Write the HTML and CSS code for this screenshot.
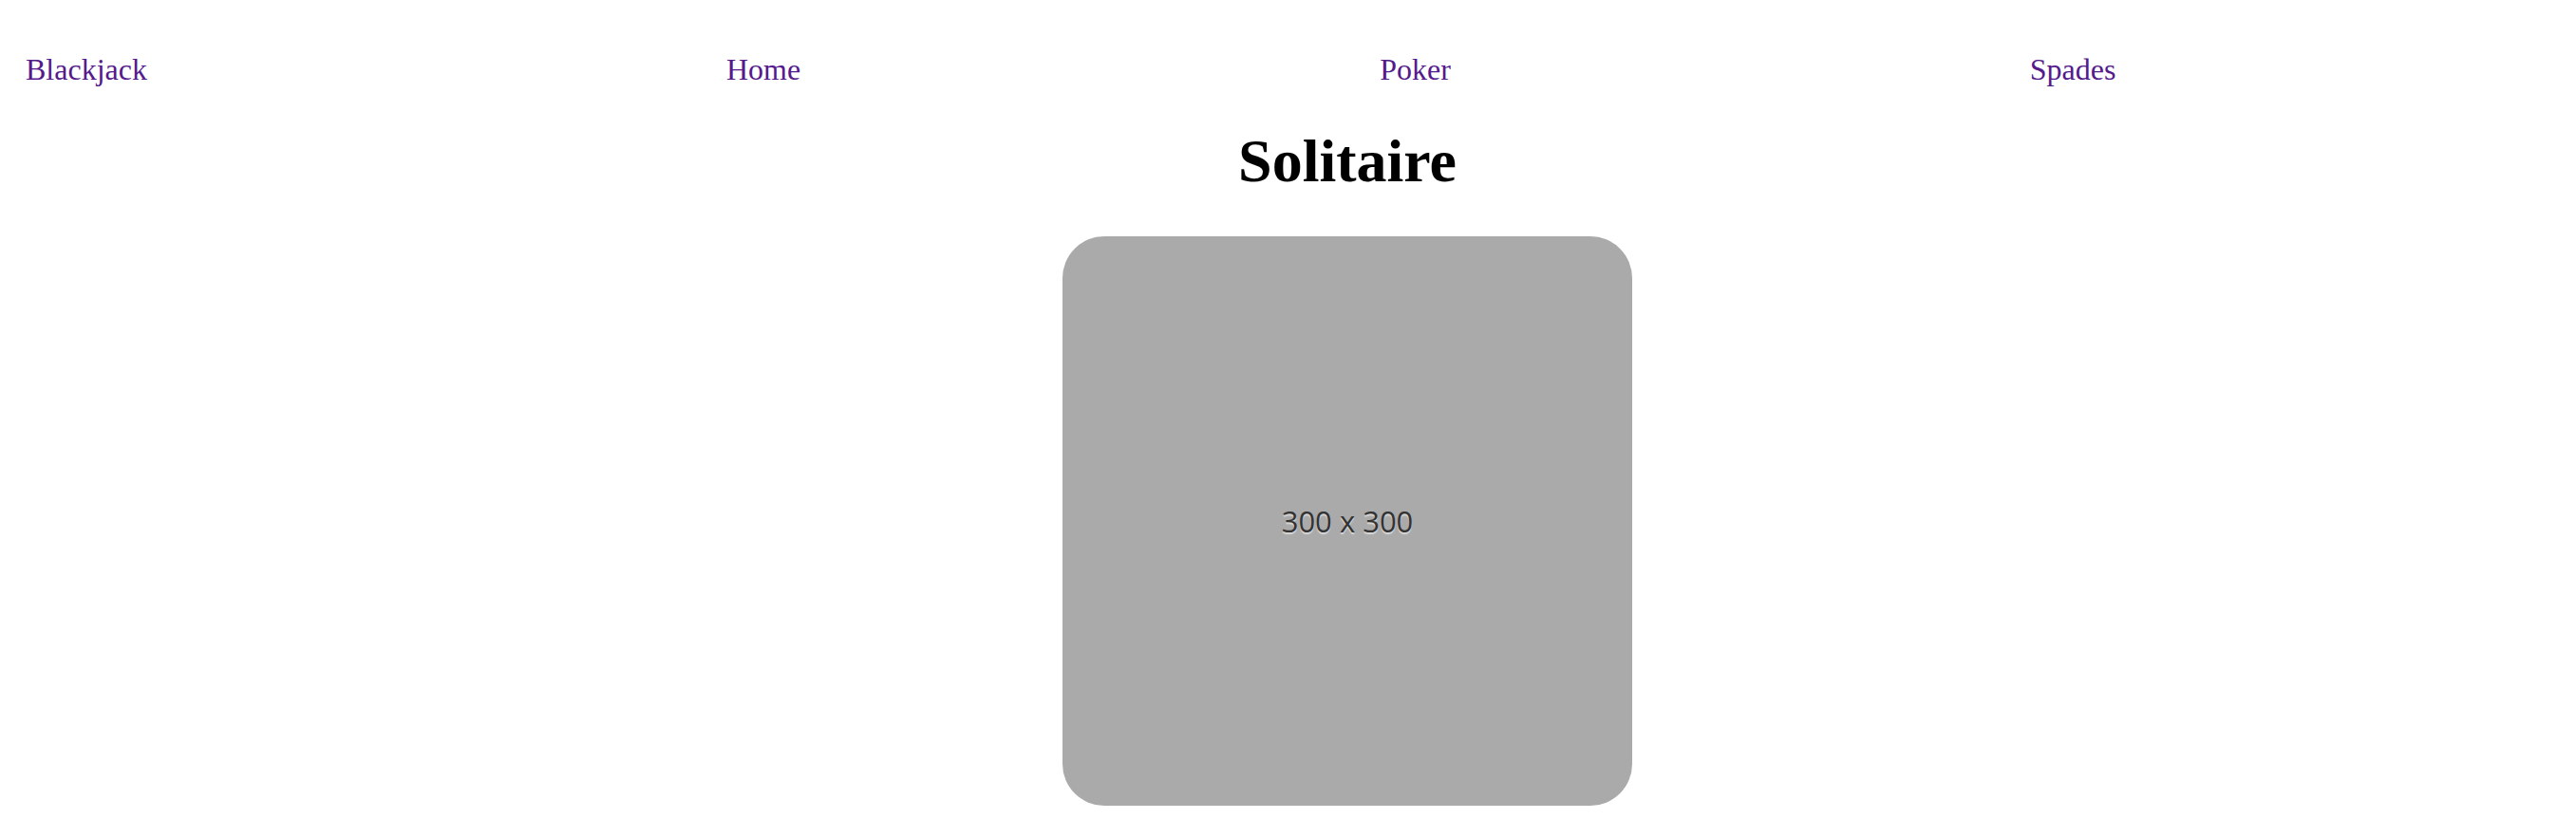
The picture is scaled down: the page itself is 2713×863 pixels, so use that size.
FILE: index.html
```html
<!DOCTYPE html>
<html>
<head>
<meta charset="utf-8">
<title>Solitaire</title>
<link rel="stylesheet" href="styles.css">
</head>
<body>
<nav class="nav">
  <a class="nav-link" href="#">Blackjack</a>
  <a class="nav-link" href="#">Home</a>
  <a class="nav-link" href="#">Poker</a>
  <a class="nav-link" href="#">Spades</a>
</nav>
<main class="main">
  <h1 class="title">Solitaire</h1>
  <div class="placeholder"><span class="placeholder-text">300 x 300</span></div>
</main>
</body>
</html>
```

FILE: styles.css
```css
html, body {
  margin: 0;
  padding: 0;
  background: #ffffff;
}
body {
  font-family: "Liberation Serif", "Times New Roman", serif;
  font-size: 32px;
  color: #000;
}
.nav {
  display: flex;
  gap: 610px;
  padding: 55px 0 0 27px;
  line-height: 36.8px;
}
.nav-link {
  color: #551a8b;
  text-decoration: none;
}
.main {
  display: flex;
  flex-direction: column;
  align-items: center;
  padding-left: 133px;
  padding-right: 8px;
}
.title {
  margin: 41px 0 43px;
  font-size: 64px;
  font-weight: bold;
  line-height: 73.6px;
}
.placeholder {
  width: 600px;
  height: 600px;
  border-radius: 44px;
  background: #aaaaaa;
  display: flex;
  align-items: center;
  justify-content: center;
}
.placeholder-text {
  font-family: "Open Sans", "DejaVu Sans", sans-serif;
  font-size: 31px;
  color: #333333;
  text-shadow: 0 2px 1px #d8d8d8;
}
```
